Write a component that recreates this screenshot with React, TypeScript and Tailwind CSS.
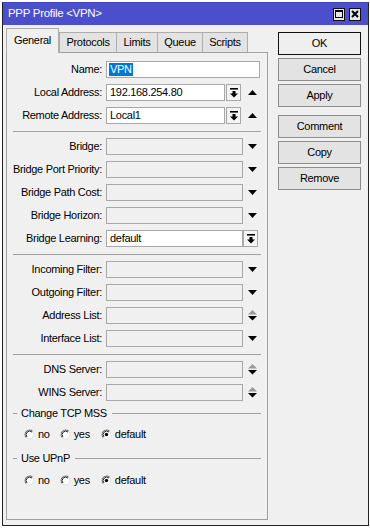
import type { ReactNode } from "react";

type Kind = "name" | "combo" | "drop" | "updown" | "select";

type Field = { label: string; kind: Kind; value?: string };

const SECTIONS: Field[][] = [
  [
    { label: "Name:", kind: "name", value: "VPN" },
    { label: "Local Address:", kind: "combo", value: "192.168.254.80" },
    { label: "Remote Address:", kind: "combo", value: "Local1" },
  ],
  [
    { label: "Bridge:", kind: "drop" },
    { label: "Bridge Port Priority:", kind: "drop" },
    { label: "Bridge Path Cost:", kind: "drop" },
    { label: "Bridge Horizon:", kind: "drop" },
    { label: "Bridge Learning:", kind: "select", value: "default" },
  ],
  [
    { label: "Incoming Filter:", kind: "drop" },
    { label: "Outgoing Filter:", kind: "drop" },
    { label: "Address List:", kind: "updown" },
    { label: "Interface List:", kind: "drop" },
  ],
  [
    { label: "DNS Server:", kind: "updown" },
    { label: "WINS Server:", kind: "updown" },
  ],
];

const TABS = [
  { name: "General", w: "w-[53px]" },
  { name: "Protocols", w: "w-[57px]" },
  { name: "Limits", w: "w-[41px]" },
  { name: "Queue", w: "w-[45px]" },
  { name: "Scripts", w: "w-[46px]" },
];

function DownTriangle() {
  return (
    <svg width="9" height="5" viewBox="0 0 9 5">
      <polygon points="0,0 9,0 4.5,5" fill="#000" />
    </svg>
  );
}

function UpTriangle() {
  return (
    <svg width="9" height="5" viewBox="0 0 9 5">
      <polygon points="0,5 9,5 4.5,0" fill="#000" />
    </svg>
  );
}

function UpDown() {
  return (
    <svg width="9" height="11" viewBox="0 0 9 11">
      <polygon points="0,4.5 9,4.5 4.5,0" fill="#9a9a9a" />
      <polygon points="0,6 9,6 4.5,10.5" fill="#000" />
    </svg>
  );
}

function DropButton() {
  return (
    <div className="flex h-[17px] w-[15px] shrink-0 items-center justify-center border border-[#a8a8a8] bg-[#f4f4f4]">
      <svg width="8" height="10" viewBox="0 0 8 10">
        <rect x="0" y="0" width="8" height="1.6" fill="#000" />
        <polygon points="2.5,3 5.5,3 5.5,5.5 8,5.5 4,9.5 0,5.5 2.5,5.5" fill="#000" />
      </svg>
    </div>
  );
}

function Box({ width, value, children }: { width: string; value?: string; children?: ReactNode }) {
  return (
    <div
      className={`flex h-[17px] shrink-0 items-center border border-[#a8a8a8] pl-[3px] ${width} ${
        value !== undefined || children ? "bg-white" : "bg-[#f0f0f0]"
      }`}
    >
      {children ?? value}
    </div>
  );
}

function FieldRow({ field }: { field: Field }) {
  return (
    <div className="flex h-[17px] items-center">
      <span className="w-[95px] shrink-0 text-right">{field.label}</span>
      <div className="ml-[4px] flex items-center">
        {field.kind === "name" && (
          <Box width="w-[154px]">
            <span className="-ml-[1px] bg-[#0078d7] px-[1px] leading-[13px] text-white">{field.value}</span>
          </Box>
        )}
        {field.kind === "combo" && (
          <>
            <Box width="w-[119px]" value={field.value} />
            <div className="ml-[1px]">
              <DropButton />
            </div>
            <div className="ml-[7px] flex">
              <UpTriangle />
            </div>
          </>
        )}
        {field.kind === "drop" && (
          <>
            <Box width="w-[137px]" />
            <div className="ml-[5px] flex">
              <DownTriangle />
            </div>
          </>
        )}
        {field.kind === "updown" && (
          <>
            <Box width="w-[137px]" />
            <div className="ml-[5px] flex">
              <UpDown />
            </div>
          </>
        )}
        {field.kind === "select" && (
          <>
            <Box width="w-[137px]" value={field.value} />
            <DropButton />
          </>
        )}
      </div>
    </div>
  );
}

function Radio({ checked }: { checked?: boolean }) {
  return (
    <svg width="11" height="11" viewBox="0 0 11 11" className="shrink-0">
      <circle cx="5.5" cy="5.5" r="5" fill="#fff" />
      <path d="M2.32 8.68 A4.5 4.5 0 0 1 8.68 2.32" fill="none" stroke="#6e6e6e" strokeWidth="1.1" />
      <path d="M3.03 7.97 A3.5 3.5 0 0 1 7.97 3.03" fill="none" stroke="#2a2a2a" strokeWidth="1" />
      <path d="M8.68 2.32 A4.5 4.5 0 0 1 2.32 8.68" fill="none" stroke="#dcdcdc" strokeWidth="1" />
      {checked && <circle cx="5.5" cy="5.5" r="1.7" fill="#000" />}
    </svg>
  );
}

function RadioGroup() {
  return (
    <div className="flex h-[12px] items-center pl-[17px]">
      <Radio />
      <span className="ml-[3px]">no</span>
      <div className="ml-[10px] flex items-center">
        <Radio />
        <span className="ml-[3px]">yes</span>
      </div>
      <div className="ml-[11px] flex items-center">
        <Radio checked />
        <span className="ml-[3px]">default</span>
      </div>
    </div>
  );
}

function GroupHeading({ title }: { title: string }) {
  return (
    <div className="flex h-[14px] items-center pl-[6px] pr-[6px]">
      <div className="h-px w-[4px] bg-[#a0a0a0]" />
      <span className="ml-[4px] mr-[5px]">{title}</span>
      <div className="h-px flex-1 bg-[#a0a0a0]" />
    </div>
  );
}

function TitleButton({ kind }: { kind: "max" | "close" }) {
  return (
    <div className="flex h-[13px] w-[12px] items-center justify-center border border-[#111] bg-[#e6e6e6]">
      {kind === "max" ? (
        <svg width="8" height="8" viewBox="0 0 8 8">
          <rect x="0.5" y="0.5" width="7" height="7" fill="none" stroke="#000" />
          <rect x="0" y="0" width="8" height="2" fill="#000" />
        </svg>
      ) : (
        <svg width="8" height="8" viewBox="0 0 8 8">
          <path d="M1 1 L7 7 M7 1 L1 7" stroke="#000" strokeWidth="2" />
        </svg>
      )}
    </div>
  );
}

const BUTTONS = ["OK", "Cancel", "Apply", "Comment", "Copy", "Remove"];

export default function App() {
  return (
    <div className="h-[528px] w-[370px] overflow-hidden bg-white pl-[2px] pt-[2px] font-['Liberation_Sans',Arial,sans-serif] text-[11px] tracking-[-0.3px] text-black">
      <div className="flex h-[524px] w-[367px] flex-col border border-[#222] border-t-[#3f43b8]">
        <div className="flex h-[22px] shrink-0 items-center bg-[#4b4fcb] pl-[5px] pr-[7px]">
          <span className="text-[11.5px] text-white">PPP Profile &lt;VPN&gt;</span>
          <div className="ml-auto flex items-center gap-[4px]">
            <TitleButton kind="max" />
            <TitleButton kind="close" />
          </div>
        </div>
        <div className="flex flex-1 bg-[#f0f0f0]">
          <div className="ml-[3px] pt-[3px]">
            <div className="flex h-[24px] items-end">
              {TABS.map((tab, i) => (
                <div
                  key={tab.name}
                  className={`flex items-center justify-center border-l border-t border-[#adadad] ${tab.w} ${
                    i === 0
                      ? "relative z-10 -mb-px h-[25px] border-r bg-[#f0f0f0] pb-[1px]"
                      : "h-[20px] bg-[#e3e3e3]"
                  } ${i === TABS.length - 1 ? "border-r" : ""}`}
                >
                  {tab.name}
                </div>
              ))}
            </div>
            <div className="h-[468px] w-[262px] border border-[#a0a0a0] pt-[8px]">
              {SECTIONS.map((section, si) => (
                <div key={si}>
                  {si > 0 && <div className="mx-[6px] mb-[6px] mt-[7px] h-px bg-[#a0a0a0]" />}
                  <div className="flex flex-col gap-[6px]">
                    {section.map((field) => (
                      <FieldRow key={field.label} field={field} />
                    ))}
                  </div>
                </div>
              ))}
              <div className="mt-[5px]">
                <GroupHeading title="Change TCP MSS" />
              </div>
              <div className="mt-[8px]">
                <RadioGroup />
              </div>
              <div className="mt-[11px]">
                <GroupHeading title="Use UPnP" />
              </div>
              <div className="mt-[9px]">
                <RadioGroup />
              </div>
            </div>
          </div>
          <div className="ml-[10px] flex flex-col pt-[7px]">
            {BUTTONS.map((b, i) => (
              <div
                key={b}
                className={`flex h-[23px] w-[83px] items-center justify-center border ${
                  i === 0 ? "border-[#111] bg-[#efefef]" : "border-[#8c8c8c] bg-[#e3e3e3]"
                } ${i === 0 ? "" : i === 3 ? "mt-[8px]" : "mt-[3px]"}`}
              >
                {b}
              </div>
            ))}
          </div>
        </div>
      </div>
    </div>
  );
}
